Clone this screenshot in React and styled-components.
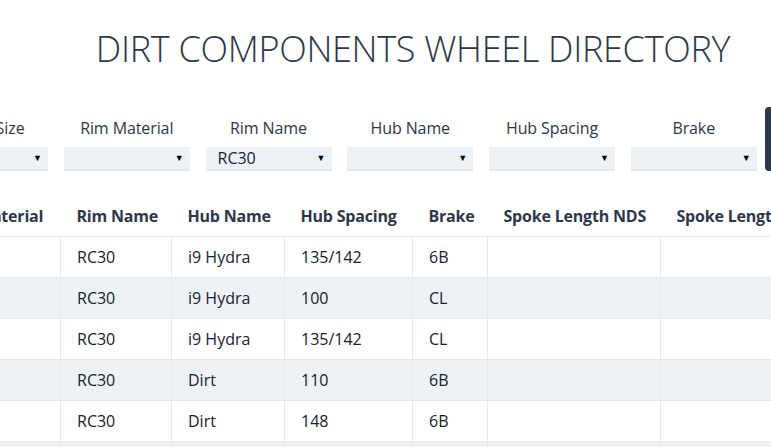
import React from "react";
import styled, { createGlobalStyle } from "styled-components";

const GlobalStyle = createGlobalStyle`
  html, body {
    margin: 0;
    padding: 0;
    background: #ffffff;
    overflow: hidden;
  }
  body {
    font-family: "Open Sans", "Noto Sans", "Liberation Sans", sans-serif;
    font-size: 16px;
    color: #2d3748;
  }
  * { box-sizing: border-box; }
`;

const Frame = styled.div`
  width: 771px;
  height: 447px;
  overflow: hidden;
`;

const Page = styled.main`
  width: 1326px;
  margin-left: -250px;
  padding-top: 22px;
`;

const Title = styled.h1`
  margin: 0;
  font-size: 36px;
  line-height: 54px;
  font-weight: 300;
  text-align: center;
  color: #2d3748;
  letter-spacing: -0.3px;
`;

const FilterBar = styled.div`
  display: flex;
  align-items: flex-end;
  gap: 8px;
  margin-top: 31px;
  padding-left: 172px;
`;

const FilterList = styled.div`
  display: flex;
  gap: 15.75px;
`;

const FilterGroup = styled.label`
  width: 126px;
  display: flex;
  flex-direction: column;
`;

const FilterLabel = styled.span`
  display: block;
  text-align: center;
  line-height: 24px;
  margin-bottom: 7px;
  color: #2d3748;
  white-space: nowrap;
  letter-spacing: -0.1px;
`;

const SelectWrap = styled.div`
  position: relative;
  height: 24px;
  &::after {
    content: "▼";
    position: absolute;
    right: 6px;
    top: 5px;
    font-size: 9px;
    line-height: 12px;
    color: #000;
    pointer-events: none;
  }
`;

const Select = styled.select`
  appearance: none;
  -webkit-appearance: none;
  width: 100%;
  height: 24px;
  margin: 0;
  padding: 0 20px 0 12px;
  border: none;
  border-bottom: 2px solid #e2e8f0;
  border-radius: 0;
  background: #edf2f7;
  font-family: inherit;
  font-size: 16px;
  line-height: 22px;
  color: #1a202c;
  outline: none;
`;

const ActionButton = styled.button`
  height: 64px;
  padding: 0 24px;
  border: none;
  border-radius: 4px;
  background: #2d3748;
  color: #ffffff;
  font-family: inherit;
  font-size: 16px;
  font-weight: 700;
`;

const Table = styled.table`
  width: 1021px;
  margin-top: 25px;
  margin-left: 59px;
  border-collapse: collapse;
  table-layout: fixed;
`;

const HeadCell = styled.th`
  padding: 8px 16px;
  line-height: 24px;
  font-weight: 700;
  text-align: left;
  color: #2d3748;
  white-space: nowrap;
  overflow: hidden;
  letter-spacing: -0.2px;
  border-bottom: 1px solid #e2e8f0;
`;

const Row = styled.tr`
  background: ${(p) => (p.$striped ? "#edf2f7" : "#ffffff")};
`;

const Cell = styled.td`
  padding: 8px 16px;
  height: 41px;
  line-height: 24px;
  color: #1a202c;
  border: 1px solid #e2e8f0;
  white-space: nowrap;
  overflow: hidden;
`;

const filters = [
  { label: "Wheel Size", value: "" },
  { label: "Rim Material", value: "" },
  { label: "Rim Name", value: "RC30" },
  { label: "Hub Name", value: "" },
  { label: "Hub Spacing", value: "" },
  { label: "Brake", value: "" },
];

const columns = [
  { label: "Wheel Size", width: 117 },
  { label: "Rim Material", width: 134 },
  { label: "Rim Name", width: 111 },
  { label: "Hub Name", width: 113 },
  { label: "Hub Spacing", width: 128 },
  { label: "Brake", width: 75 },
  { label: "Spoke Length NDS", width: 173 },
  { label: "Spoke Length DS", width: 170 },
];

const rows = [
  ["", "", "RC30", "i9 Hydra", "135/142", "6B", "", ""],
  ["", "", "RC30", "i9 Hydra", "100", "CL", "", ""],
  ["", "", "RC30", "i9 Hydra", "135/142", "CL", "", ""],
  ["", "", "RC30", "Dirt", "110", "6B", "", ""],
  ["", "", "RC30", "Dirt", "148", "6B", "", ""],
  ["", "", "RC30", "Dirt", "142", "CL", "", ""],
];

export default function App() {
  return (
    <Frame>
      <GlobalStyle />
      <Page>
        <Title>DIRT COMPONENTS WHEEL DIRECTORY</Title>
        <FilterBar>
          <FilterList>
            {filters.map((f) => (
              <FilterGroup key={f.label}>
                <FilterLabel>{f.label}</FilterLabel>
                <SelectWrap>
                  <Select defaultValue={f.value}>
                    <option value=""></option>
                    {f.value && <option value={f.value}>{f.value}</option>}
                  </Select>
                </SelectWrap>
              </FilterGroup>
            ))}
          </FilterList>
          <ActionButton type="button">Reset</ActionButton>
        </FilterBar>
        <Table>
          <colgroup>
            {columns.map((c) => (
              <col key={c.label} style={{ width: c.width }} />
            ))}
          </colgroup>
          <thead>
            <tr>
              {columns.map((c) => (
                <HeadCell key={c.label}>{c.label}</HeadCell>
              ))}
            </tr>
          </thead>
          <tbody>
            {rows.map((r, i) => (
              <Row key={i} $striped={i % 2 === 1}>
                {r.map((v, j) => (
                  <Cell key={j}>{v}</Cell>
                ))}
              </Row>
            ))}
          </tbody>
        </Table>
      </Page>
    </Frame>
  );
}
